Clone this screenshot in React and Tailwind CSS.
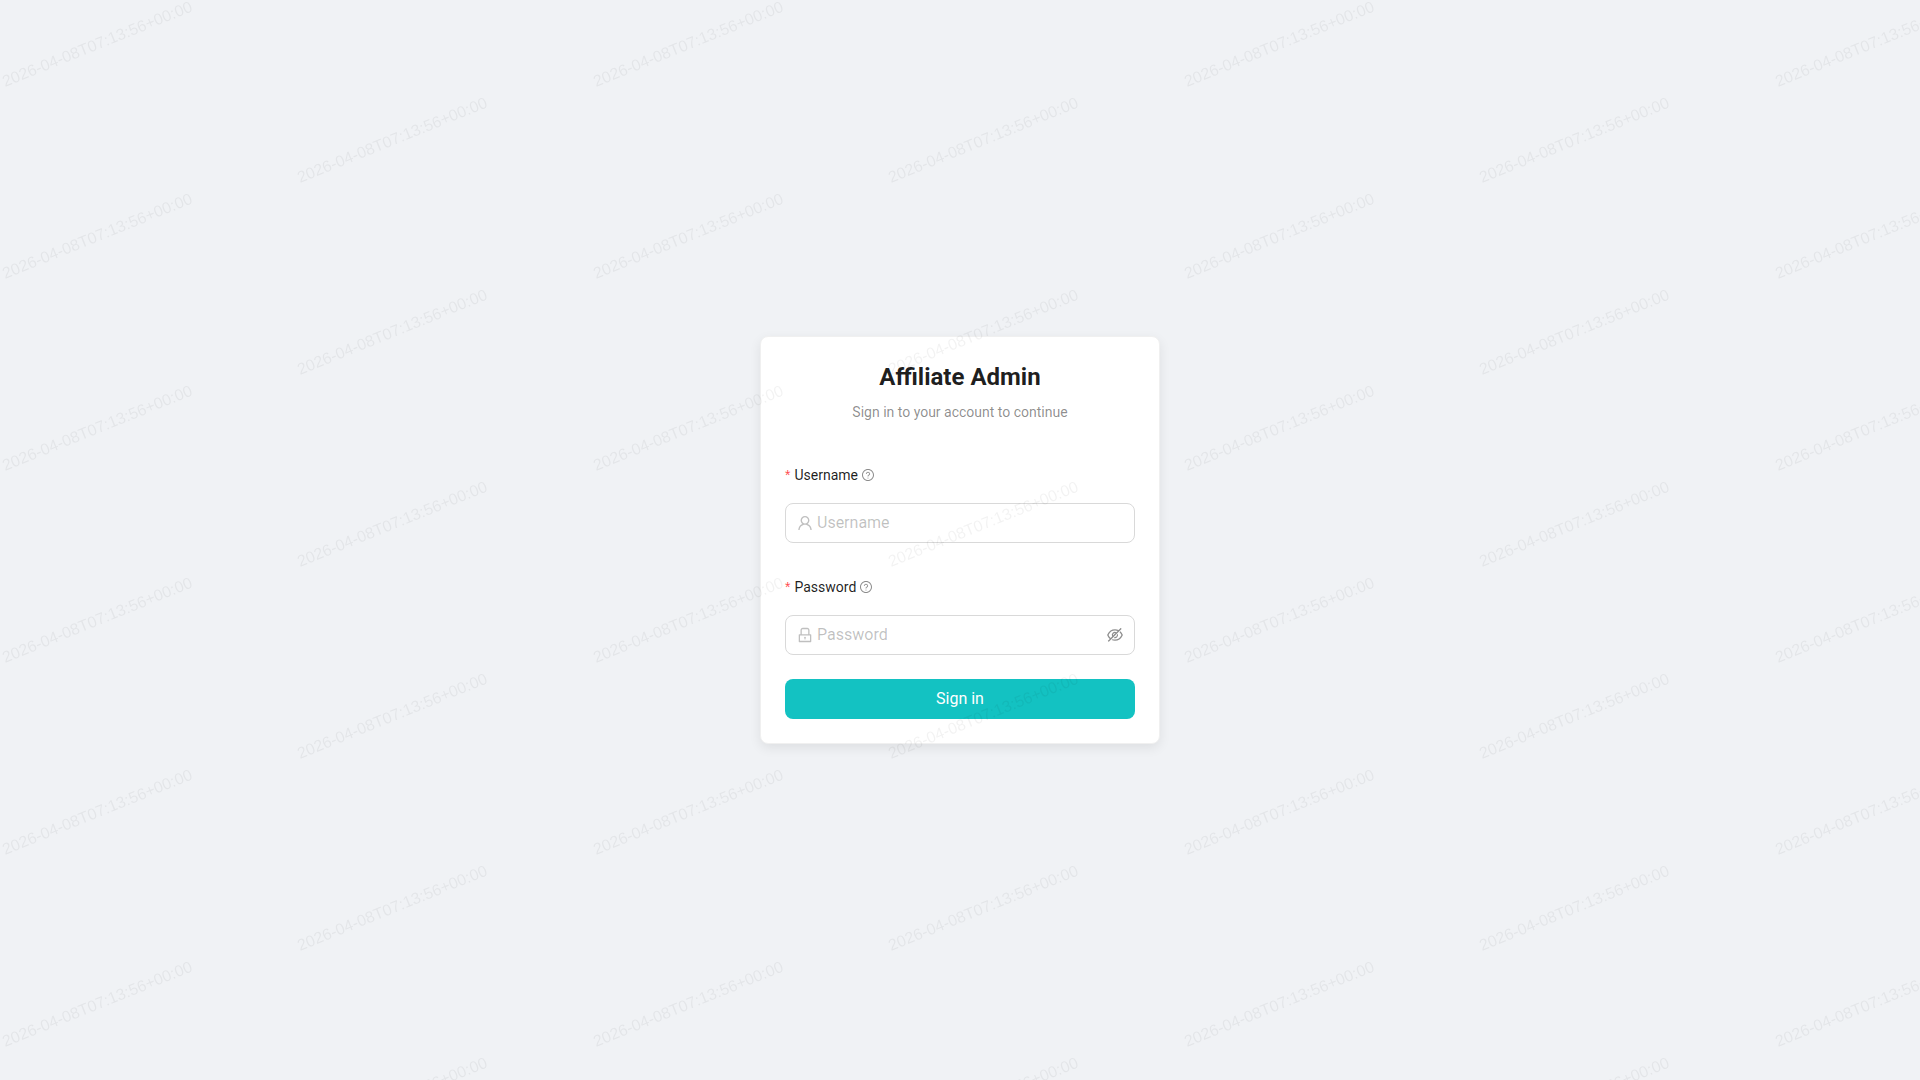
import React, { useState } from 'react';
import {
  AiOutlineUser,
  AiOutlineLock,
  AiOutlineQuestionCircle,
  AiOutlineEye,
  AiOutlineEyeInvisible,
} from 'react-icons/ai';

const STAMP = '2026-04-08T07:13:56+00:00';

// The icon set has a 64 unit margin on each side, this trims it off
const ICON_BOX = '64 64 896 896';

// Repeating diagonal stamp, every other row is shifted by half a column
function Watermark() {
  const marks = [];
  for (let row = 0; row < 12; row++) {
    for (let col = 0; col < 4; col++) {
      marks.push({ x: 5 + col * 591 + (row % 2) * 295, y: 87 + row * 96 });
    }
  }

  return (
    <svg className="fixed inset-0 w-full h-full pointer-events-none" aria-hidden="true">
      {marks.map(({ x, y }) => (
        <text
          key={`${x}-${y}`}
          transform={`translate(${x} ${y}) rotate(-22)`}
          className="text-base font-['Liberation_Sans',sans-serif] fill-black/5"
        >
          {STAMP}
        </text>
      ))}
    </svg>
  );
}

function Field({ id, label, icon: Icon, suffix, ...inputProps }) {
  return (
    <div className="mb-6">
      <div className="h-10 mb-2 flex items-center text-sm text-black/88">
        <span className="mr-1 text-[#ff4d4f] font-['Liberation_Sans',sans-serif]">*</span>
        <label htmlFor={id}>{label}</label>
        <AiOutlineQuestionCircle viewBox={ICON_BOX} className="ml-1 size-3 text-black/45" />
      </div>
      <div className="h-10 px-[11px] flex items-center gap-1 rounded-lg border border-[#d9d9d9] bg-white focus-within:border-[#13c2c2]">
        <Icon viewBox={ICON_BOX} className="size-4 shrink-0 text-black/25" />
        <input
          id={id}
          name={id}
          required
          className="flex-1 min-w-0 text-base text-black/88 placeholder-black/25 bg-transparent outline-none"
          {...inputProps}
        />
        {suffix}
      </div>
    </div>
  );
}

export default function App() {
  const [showPassword, setShowPassword] = useState(false);
  const [formData, setFormData] = useState({ username: '', password: '' });

  const handleChange = (e) => {
    setFormData({ ...formData, [e.target.name]: e.target.value });
  };

  const EyeIcon = showPassword ? AiOutlineEye : AiOutlineEyeInvisible;

  return (
    <div className="min-h-screen flex items-center justify-center bg-[#f0f2f5] font-[Roboto,sans-serif]">
      <main className="w-full max-w-[400px] p-6 rounded-lg border border-[#f0f0f0] bg-white shadow-[0_4px_12px_rgba(0,0,0,0.08)]">
        <div className="mb-8 text-center">
          <h1 className="mb-2 text-2xl leading-8 font-bold text-black/88">Affiliate Admin</h1>
          <p className="text-sm leading-[22px] text-black/45">Sign in to your account to continue</p>
        </div>

        <form onSubmit={(e) => e.preventDefault()}>
          <Field
            id="username"
            label="Username"
            icon={AiOutlineUser}
            type="text"
            placeholder="Username"
            value={formData.username}
            onChange={handleChange}
          />
          <Field
            id="password"
            label="Password"
            icon={AiOutlineLock}
            type={showPassword ? 'text' : 'password'}
            placeholder="Password"
            value={formData.password}
            onChange={handleChange}
            suffix={
              <button
                type="button"
                aria-label="Toggle password visibility"
                onClick={() => setShowPassword(!showPassword)}
                className="shrink-0 text-black/45 hover:text-black/88 cursor-pointer"
              >
                <EyeIcon viewBox={ICON_BOX} className="size-4" />
              </button>
            }
          />
          <button
            type="submit"
            className="w-full h-10 rounded-lg bg-[#13c2c2] hover:bg-[#36cfc9] text-base text-white cursor-pointer"
          >
            Sign in
          </button>
        </form>
      </main>
      <Watermark />
    </div>
  );
}
